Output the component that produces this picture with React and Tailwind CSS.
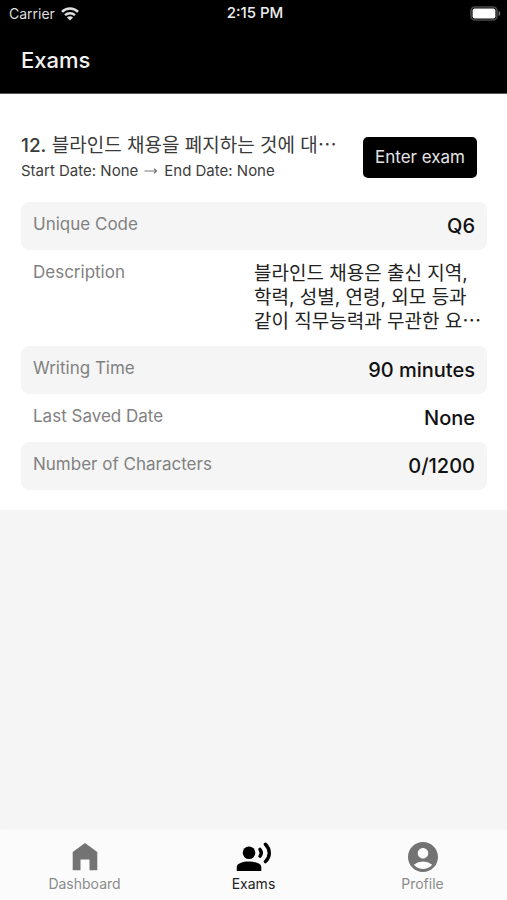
import { MdAccountCircle } from "react-icons/md";
import clsx from "clsx";

const exam = {
  number: "12.",
  title: "블라인드 채용을 폐지하는 것에 대⋯",
  startDate: "None",
  endDate: "None",
  description: [
    "블라인드 채용은 출신 지역,",
    "학력, 성별, 연령, 외모 등과",
    "같이 직무능력과 무관한 요⋯",
  ],
};

const HomeIcon = () => (
  <svg viewBox="0 0 26 28" className="w-[26px] h-7" fill="currentColor">
    <path d="M13 0 25.3 9V27.3H17.5V16.4H8.5V27.3H.7V9Z" />
  </svg>
);

const SpeakerIcon = () => (
  <svg viewBox="0 0 36 30" className="w-9 h-[30px]" fill="none">
    <circle cx="13" cy="10.8" r="6.3" fill="currentColor" />
    <path
      d="M.8 29V25.2C.8 21.4 6.6 19.6 13 19.6s12.3 1.8 12.3 5.6V29Z"
      fill="currentColor"
    />
    <path
      d="M24 7.4c1.5 2 1.5 4.8 0 6.8"
      stroke="currentColor"
      strokeWidth="3.4"
      strokeLinecap="round"
    />
    <path
      d="M29.4 2.2c5.2 5.2 5.2 12.2 0 17.4"
      stroke="currentColor"
      strokeWidth="3.4"
      strokeLinecap="round"
    />
  </svg>
);

const ArrowIcon = () => (
  <svg viewBox="0 0 14 8" className="w-3.5 h-2 text-[#777]" fill="none">
    <path
      d="M.5 4h12M10 1.8 12.6 4 10 6.2"
      stroke="currentColor"
      strokeWidth="1.2"
    />
  </svg>
);

const WifiIcon = () => (
  <svg viewBox="0 0 18 14" className="w-[18px] h-3.5" fill="none">
    <path
      d="M1 4.8C5.5.4 12.5.4 17 4.8M4 8.2c2.8-2.7 7.2-2.7 10 0"
      stroke="currentColor"
      strokeWidth="2.4"
    />
    <path d="M9 13.6 5.9 10.4c1.8-1.6 4.4-1.6 6.2 0Z" fill="currentColor" />
  </svg>
);

const BatteryIcon = () => (
  <svg viewBox="0 0 31 15" className="w-[31px] h-[15px]" fill="none">
    <rect x="1" y="1" width="26" height="13" rx="4" stroke="#4a4a4a" strokeWidth="1.6" />
    <rect x="2.6" y="2.6" width="22.8" height="9.8" rx="2" fill="#fff" />
    <path d="M28.6 5v5c2.3-.8 2.3-4.2 0-5Z" fill="#777" />
  </svg>
);

const StatusBar = () => (
  <div className="grid grid-cols-3 items-center h-[27px] pl-[9px] pr-1.5 text-[14px]">
    <div className="flex items-center gap-1.5 text-[#dedede]">
      Carrier <WifiIcon />
    </div>
    <p className="font-medium text-center text-[15px] text-[#eee]">2:15 PM</p>
    <div className="flex justify-end">
      <BatteryIcon />
    </div>
  </div>
);

const Row = ({ label, shaded, children }) => (
  <div
    className={clsx(
      "flex justify-between px-3 pt-2.5 pb-3.5 rounded-lg",
      shaded && "bg-[#f5f5f5]"
    )}
  >
    <dt className="text-[17px] leading-6 text-[#818181]">{label}</dt>
    <dd className="pt-0.5 -mb-0.5 text-[20px] leading-6 font-medium text-[#111]">
      {children}
    </dd>
  </div>
);

const Tab = ({ label, active, children }) => (
  <a
    href="#"
    aria-current={active ? "page" : undefined}
    className={clsx(
      "flex flex-col items-center flex-1",
      active ? "text-black" : "text-[#737373]"
    )}
  >
    <span className="flex items-center h-9">{children}</span>
    <span
      className={clsx(
        "text-[14px] leading-[18px]",
        active ? "text-[#222]" : "text-[#8b8b8b]"
      )}
    >
      {label}
    </span>
  </a>
);

const App = () => {
  return (
    <div className="flex flex-col min-h-screen bg-[#f5f5f5] font-['Inter','Noto_Sans_CJK_KR',sans-serif]">
      <header className="bg-black text-white border-b border-[#555]">
        <StatusBar />
        <h1 className="pl-[21px] pr-5 pt-[17px] pb-[17px] text-[22px] leading-8 font-medium text-[#f2f2f2]">
          Exams
        </h1>
      </header>

      <main className="flex-1">
        <section className="pl-[21px] pr-5 pt-10 pb-5 bg-white">
          <div className="flex items-start justify-between pr-2.5">
            <div>
              <h2
                lang="ko"
                className="text-[19px] leading-6 whitespace-nowrap text-[#3a3a3a]"
              >
                <span className="font-medium">{exam.number}</span> {exam.title}
              </h2>
              <p className="flex items-center gap-1.5 text-[15px] leading-[26px] text-[#3d3d3d]">
                <span>Start Date: {exam.startDate}</span>
                <ArrowIcon />
                <span>End Date: {exam.endDate}</span>
              </p>
            </div>
            <button
              type="button"
              className="mt-[3px] px-3 py-2 rounded-[5px] bg-black text-[17px] leading-[25px] whitespace-nowrap text-[#e4e4e4]"
            >
              Enter exam
            </button>
          </div>

          <dl className="mt-[18px]">
            <Row label="Unique Code" shaded>
              Q6
            </Row>
            <Row label="Description">
              <p
                lang="ko"
                className="w-[221px] text-[19px] font-normal text-[#222]"
              >
                {exam.description.map((line) => (
                  <span key={line} className="block whitespace-nowrap">
                    {line}
                  </span>
                ))}
              </p>
            </Row>
            <Row label="Writing Time" shaded>
              90 minutes
            </Row>
            <Row label="Last Saved Date">None</Row>
            <Row label="Number of Characters" shaded>
              0/1200
            </Row>
          </dl>
        </section>
      </main>

      <nav className="flex pt-[9px] pb-[7px] bg-[#fbfbfb] shadow-[0_0_4px_#fbfbfb]">
        <Tab label="Dashboard">
          <HomeIcon />
        </Tab>
        <Tab label="Exams" active>
          <SpeakerIcon />
        </Tab>
        <Tab label="Profile">
          <MdAccountCircle size={36} />
        </Tab>
      </nav>
    </div>
  );
};

export default App;
